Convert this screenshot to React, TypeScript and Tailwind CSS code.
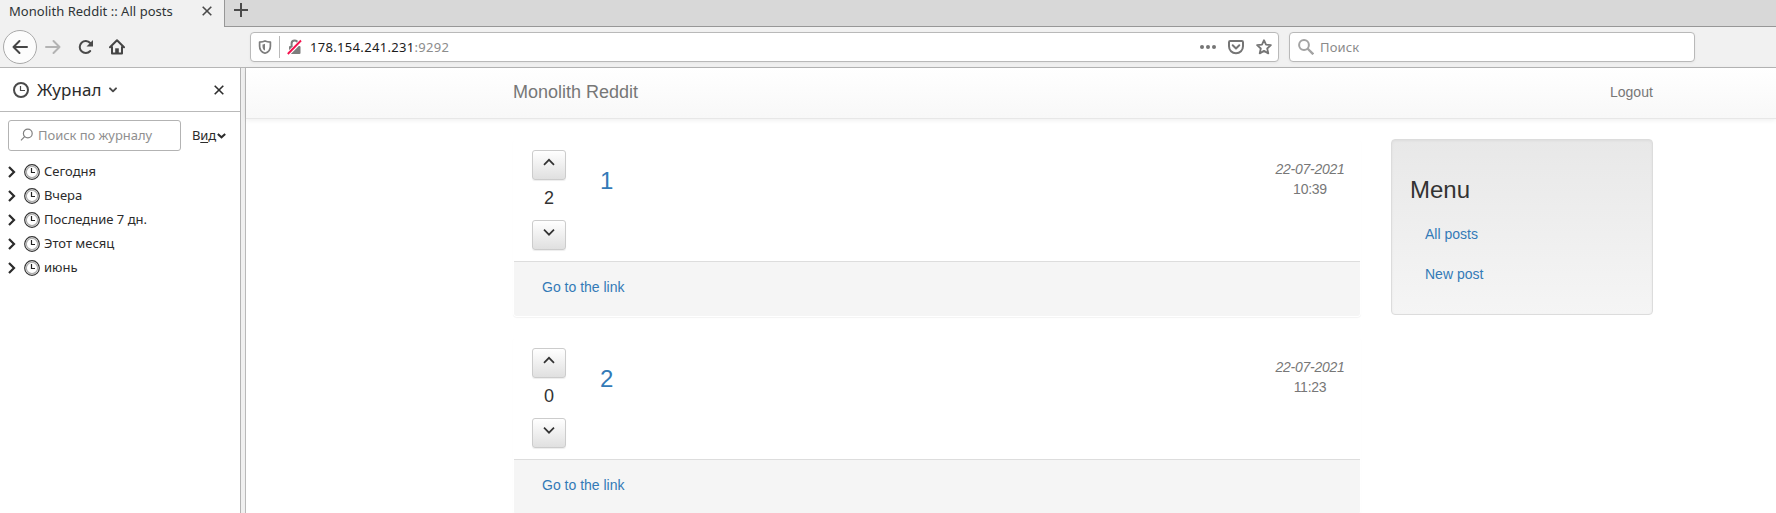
import React from "react";

const CHROME = "font-['Noto_Sans',sans-serif]";

function Cross({ className }: { className: string }) {
  return (
    <svg width="10" height="10" viewBox="0 0 10 10" className={className} fill="none" stroke="currentColor" strokeWidth="1.6">
      <path d="M.7.7l8.6 8.6M9.3.7L.7 9.3" />
    </svg>
  );
}

function TabStrip() {
  return (
    <div className="flex h-[27px] shrink-0 bg-[#d8d8d8]">
      <div className="flex w-[224px] items-start bg-[#f1f1f1] pl-[9px]">
        <span className="w-[193px] whitespace-nowrap pt-px text-[13px] leading-[20px] tracking-[0.03px] text-[#2e3436]">
          Monolith Reddit :: All posts
        </span>
        <Cross className="mt-[6px] text-[#4a4a4a]" />
      </div>
      <div className="flex-1 border-b border-l border-[#979797] pl-[9px]">
        <svg width="14" height="14" viewBox="0 0 14 14" className="mt-[3px] text-[#4a4a4a]" fill="none" stroke="currentColor" strokeWidth="2">
          <path d="M7 0v14M0 7h14" />
        </svg>
      </div>
    </div>
  );
}

function Toolbar() {
  return (
    <div className="flex h-[41px] shrink-0 items-start border-b border-[#b6b6b6] bg-[#f1f1f1] pt-[3px]">
      <div className="flex w-[247px] items-center pl-[3px]">
        <div className="flex h-[34px] w-[34px] items-center justify-center rounded-full border border-[#a9a9a9] bg-[#fcfcfc] text-[#454545]">
          <svg width="16" height="16" viewBox="0 0 16 16" fill="none" stroke="currentColor" strokeWidth="2" strokeLinecap="round" strokeLinejoin="round">
            <path d="M15 8H1.5M7.5 2L1.5 8l6 6" />
          </svg>
        </div>
        <svg width="16" height="16" viewBox="0 0 16 16" className="ml-[8px] text-[#b3b3b3]" fill="none" stroke="currentColor" strokeWidth="2" strokeLinecap="round" strokeLinejoin="round">
          <path d="M1 8h13.5M8.5 2l6 6-6 6" />
        </svg>
        <svg width="16" height="16" viewBox="0 0 16 16" className="ml-[17px] text-[#4a4a4a]" fill="none" stroke="currentColor" strokeWidth="2">
          <path d="M12.2 12A6 6 0 1 1 12.2 4" strokeLinecap="round" />
          <path d="M15 1v6.500H8.500l2.500-2.500z" fill="currentColor" stroke="none" />
        </svg>
        <svg width="16" height="16" viewBox="0 0 16 16" className="ml-[15px] text-[#454545]" fill="none" stroke="currentColor" strokeWidth="2" strokeLinecap="round" strokeLinejoin="round">
          <path d="M1 8.300L8 1.300l7 7M3 8v6.600h10V8" />
          <path d="M6.200 14V9.300h3.600V14z" fill="currentColor" stroke="none" />
        </svg>
      </div>
      <div className="ml-[3px] mt-[2px] flex h-[30px] w-[1029px] items-center rounded-[4px] border border-[#b9b9b9] bg-white shadow-[0_1px_3px_rgba(0,0,0,0.05)]">
        <svg width="14" height="16" viewBox="0 0 14 16" className="ml-[7px] text-[#7d7d7d]" fill="none" stroke="currentColor">
          <path d="M7 1.900C5.300 2.700 3.400 3 1.600 3.100v4.100c0 3.600 2 6 5.400 7 3.400-1 5.400-3.400 5.400-7V3.100C10.600 3 8.700 2.700 7 1.900z" strokeWidth="1.700" strokeLinejoin="round" />
          <path d="M7 4.800c-.8.3-1.600.5-2.500.6v2c0 2 .8 3.300 2.500 4.100z" fill="currentColor" stroke="none" />
        </svg>
        <div className="ml-[7px] h-[22px] w-px bg-[#b9b9b9]" />
        <svg width="15" height="16" viewBox="0 0 15 16" className="ml-[7px]" fill="none">
          <path d="M4.600 8V4.500a3.100 3.100 0 0 1 6.200 0V8" stroke="#7d7d7d" strokeWidth="2" />
          <rect x="2" y="7" width="11.500" height="8" rx="1" fill="#7d7d7d" />
          <path d="M1 15L14 2" stroke="white" strokeWidth="4" />
          <path d="M.8 15L14 1.500" stroke="#f5114d" strokeWidth="1.900" />
        </svg>
        <span className="ml-[8px] flex-1 whitespace-nowrap pt-[2px] text-[13px] tracking-[0.32px] text-[#1c1c1c]">
          178.154.241.231<span className="text-[#8c8c8c]">:9292</span>
        </span>
        <svg width="16" height="4" viewBox="0 0 16 4" fill="#757575">
          <circle cx="2" cy="2" r="2" />
          <circle cx="8" cy="2" r="2" />
          <circle cx="14" cy="2" r="2" />
        </svg>
        <svg width="16" height="16" viewBox="0 0 16 16" className="ml-[12px]" fill="none" stroke="#757575" strokeWidth="2" strokeLinecap="round" strokeLinejoin="round">
          <path d="M2.200 2h11.600c.7 0 1.200.5 1.200 1.200v4c0 4-3 7-7 7s-7-3-7-7v-4C1 2.500 1.500 2 2.200 2z" />
          <path d="M4.700 6.300L8 9.500l3.300-3.200" />
        </svg>
        <svg width="16" height="16" viewBox="0 0 16 16" className="ml-[12px] mr-[6px]" fill="none" stroke="#757575" strokeWidth="1.800" strokeLinejoin="round">
          <path d="M8 1.200l2 4.500 4.900.5-3.700 3.300 1.100 4.900L8 11.900l-4.300 2.500 1.100-4.900L1.100 6.200 6 5.700z" />
        </svg>
      </div>
      <div className="ml-[10px] mt-[2px] flex h-[30px] w-[406px] items-center rounded-[4px] border border-[#b9b9b9] bg-white shadow-[0_1px_3px_rgba(0,0,0,0.05)]">
        <svg width="16" height="16" viewBox="0 0 16 16" className="ml-[8px]" fill="none" stroke="#a3a3a3" strokeWidth="2">
          <circle cx="6" cy="6" r="4.900" />
          <path d="M9.500 9.500L15.300 15.300" strokeWidth="2.400" />
        </svg>
        <span className="ml-[6px] pt-[2px] text-[13px] tracking-[0.15px] text-[#8a8a8a]">Поиск</span>
      </div>
    </div>
  );
}

const periods = ["Сегодня", "Вчера", "Последние 7 дн.", "Этот месяц", "июнь"];

function Sidebar() {
  return (
    <aside className="w-[241px] shrink-0 border-r border-[#b3b3b3] bg-white text-[#2b2b2b]">
      <div className="flex h-[44px] items-center border-b border-[#b9b9b9] pl-[13px]">
        <svg width="16" height="16" viewBox="0 0 16 16" fill="none" stroke="#4a4a4a">
          <circle cx="8" cy="8" r="7" strokeWidth="2" />
          <path d="M7.500 4v4.500H12" strokeWidth="1.200" />
        </svg>
        <span className="ml-[8px] w-[65px] whitespace-nowrap text-[17px] tracking-[0.1px]">Журнал</span>
        <svg width="8" height="6" viewBox="0 0 8 6" className="ml-[7px]" fill="none" stroke="#4a4a4a" strokeWidth="1.900" strokeLinecap="round" strokeLinejoin="round">
          <path d="M1 1.300l3 3 3-3" />
        </svg>
        <Cross className="ml-[97px] text-[#2e2e2e]" />
      </div>
      <div className="flex h-[48px] items-center pl-[8px]">
        <div className="mb-px flex h-[31px] w-[173px] items-center rounded-[3px] border border-[#b3b3b3] pl-[11px]">
          <svg width="14" height="14" viewBox="0 0 14 14" className="mb-px" fill="none" stroke="#808080" strokeWidth="1.200">
            <circle cx="7.800" cy="5.500" r="4.400" />
            <path d="M4.600 8.700L1 12.300" />
          </svg>
          <span className="ml-[4px] whitespace-nowrap text-[13px] tracking-[-0.05px] text-[#8f8f8f]">Поиск по журналу</span>
        </div>
        <span className="ml-[11px] w-[24px] whitespace-nowrap text-[13px] tracking-[-0.2px]">
          В<span className="underline underline-offset-2">и</span>д
        </span>
        <svg width="9" height="6" viewBox="0 0 9 6" className="ml-px" fill="none" stroke="#2b2b2b" strokeWidth="2">
          <path d="M.8 1l3.700 3.300L8.200 1" />
        </svg>
      </div>
      <ul>
        {periods.map((p) => (
          <li key={p} className="flex h-[24px] items-center pl-[8px]">
            <svg width="8" height="12" viewBox="0 0 8 12" fill="none" stroke="#2b2b2b" strokeWidth="2.200">
              <path d="M1 1l5 5-5 5" />
            </svg>
            <svg width="16" height="16" viewBox="0 0 16 16" className="mb-px ml-[8px]" fill="none">
              <circle cx="8" cy="8" r="7.300" stroke="#333" strokeWidth="1.200" />
              <circle cx="8" cy="8" r="5.700" stroke="#b0b0b0" strokeWidth="1.300" />
              <path d="M7.500 4v4.500H11" stroke="#222" strokeWidth="1.200" />
            </svg>
            <span className="ml-[4px] whitespace-nowrap text-[13px]">{p}</span>
          </li>
        ))}
      </ul>
    </aside>
  );
}

function VoteButton({ up }: { up?: boolean }) {
  return (
    <button className="flex h-[30px] w-[34px] justify-center rounded-[3px] border border-[#ccc] bg-linear-to-b from-white to-[#e0e0e0] pt-[7px] shadow-[inset_0_1px_0_rgba(255,255,255,0.15),0_1px_1px_rgba(0,0,0,0.075)]">
      <svg width="12" height="8" viewBox="0 0 12 8" fill="none" stroke="#333" strokeWidth="1.700">
        <path d={up ? "M1 6.800l5-5 5 5" : "M1 1.700l5 5 5-5"} />
      </svg>
    </button>
  );
}

function Post({ title, votes, time }: { title: string; votes: number; time: string }) {
  return (
    <article className="mb-[20px] h-[178px] w-[848px] rounded-[4px] border border-transparent bg-white shadow-[0_1px_1px_rgba(0,0,0,0.05)]">
      <div className="flex h-[121px]">
        <div className="flex w-[70px] flex-col items-center pt-[10px]">
          <VoteButton up />
          <span className="mb-[6px] mt-[8px] h-[26px] text-[18px] leading-[20px]">{votes}</span>
          <VoteButton />
        </div>
        <h3 className="flex-1 pl-[16px] pt-[28px] text-[24px] leading-[26px] text-[#337ab7]">{title}</h3>
        <div className="w-[100px] pt-[19px] text-center text-[14px] leading-[20px] tracking-[-0.25px] text-[#777]">
          <em className="block">22-07-2021</em>
          {time}
        </div>
      </div>
      <div className="h-[55px] rounded-b-[3px] border-t border-[#ddd] bg-[#f5f5f5] pl-[28px] pt-[15px] text-[14px] leading-[20px]">
        <a className="text-[#337ab7]">Go to the link</a>
      </div>
    </article>
  );
}

function Page() {
  return (
    <main className="min-w-0 flex-1 bg-white font-['Liberation_Sans',sans-serif] text-[#333]">
      <nav className="flex h-[51px] items-center border-b border-[#e7e7e7] bg-linear-to-b from-white to-[#f8f8f8] pb-[2px] pl-[267px] text-[#777] shadow-[0_1px_5px_rgba(0,0,0,0.075)]">
        <span className="w-[1097px] text-[18px] leading-[20px]">Monolith Reddit</span>
        <span className="text-[14px] leading-[20px]">Logout</span>
      </nav>
      <div className="flex items-start pl-[267px] pt-[20px]">
        <div>
          <Post title="1" votes={2} time="10:39" />
          <Post title="2" votes={0} time="11:23" />
        </div>
        <section className="ml-[30px] h-[176px] w-[262px] rounded-[4px] border border-[#dcdcdc] bg-linear-to-b from-[#e8e8e8] to-[#f5f5f5] pl-[18px] pt-[37px] shadow-[inset_0_1px_3px_rgba(0,0,0,0.05),0_1px_0_rgba(255,255,255,0.1)]">
          <h3 className="text-[24px] leading-[26px]">Menu</h3>
          <ul className="pl-[15px] pt-[21px] text-[14px] leading-[20px] text-[#337ab7]">
            <li>All posts</li>
            <li className="mt-[20px]">New post</li>
          </ul>
        </section>
      </div>
    </main>
  );
}

export default function App() {
  return (
    <div className={`flex h-[513px] w-[1776px] flex-col overflow-hidden ${CHROME}`}>
      <TabStrip />
      <Toolbar />
      <div className="flex min-h-0 flex-1">
        <Sidebar />
        <div className="w-[5px] shrink-0 border-r border-[#b9b9b9] bg-[#f0f0f0]" />
        <Page />
      </div>
    </div>
  );
}
